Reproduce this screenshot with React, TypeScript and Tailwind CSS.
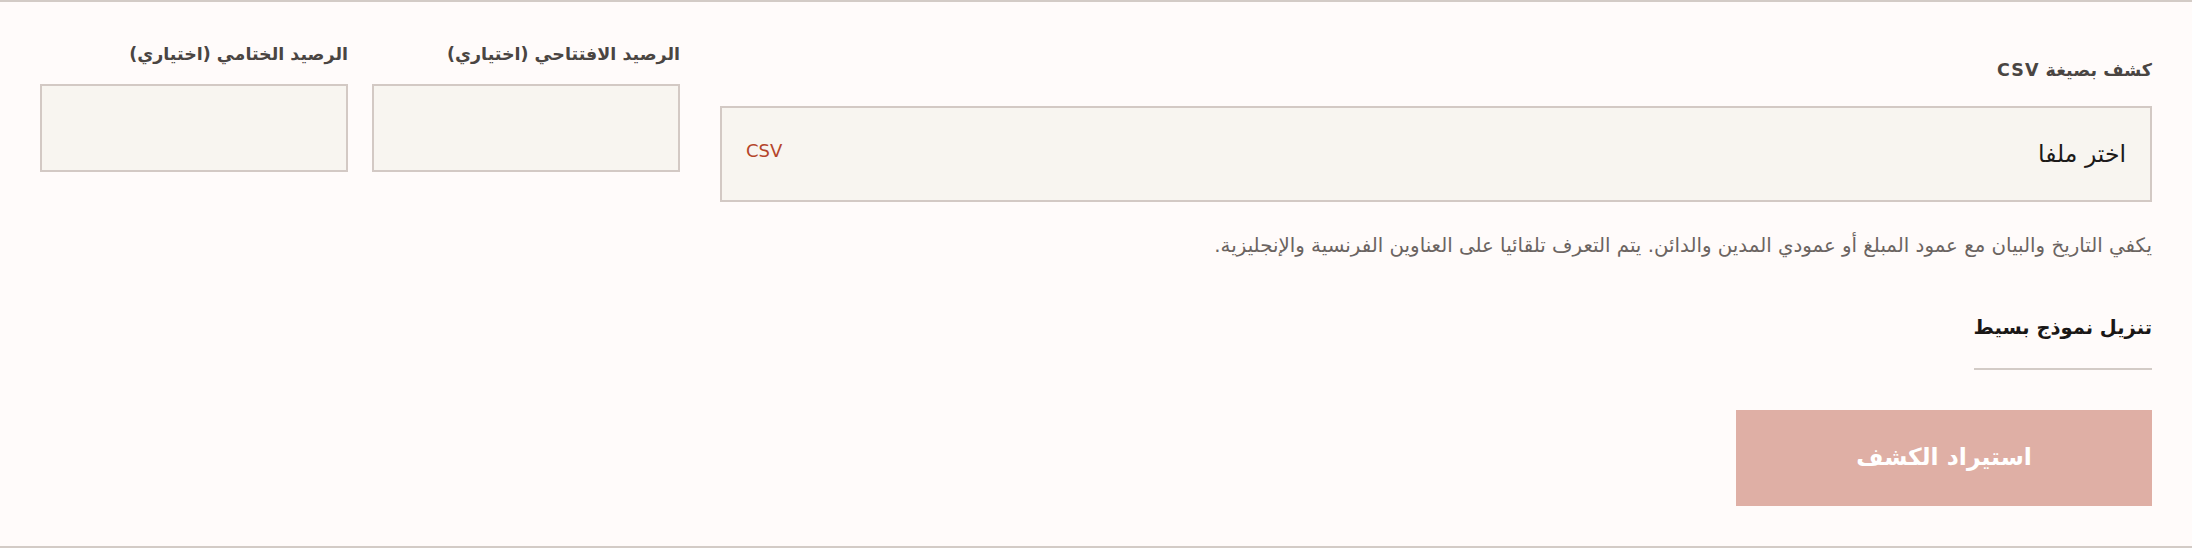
import React from "react";

const FONT = { fontFamily: '"DejaVu Sans", "Noto Sans", sans-serif' };

function BalanceField({ label }: { label: string }) {
  return (
    <div className="flex w-[308px] flex-col">
      <label className="text-[17.5px] font-bold leading-[24px] text-[#4a4542]">{label}</label>
      <input
        type="text"
        className="mt-[18px] h-[88px] w-full border-2 border-[#d3c9c4] bg-[#f8f5f0] px-4 outline-none"
      />
    </div>
  );
}

export default function App() {
  return (
    <div
      dir="rtl"
      style={FONT}
      className="box-border h-[548px] w-full border-y-2 border-[#d3cbc6] bg-[#fffbfa] px-10"
    >
      <div className="flex items-start gap-10">
        <div className="flex flex-1 flex-col pt-[56px]">
          <label className="text-[17.5px] font-bold leading-[24px] tracking-[0.06em] text-[#4a4542]">
            كشف بصيغة CSV
          </label>
          <div className="mt-[24px] flex h-[96px] items-center justify-between border-2 border-[#d3c9c4] bg-[#f8f5f0] px-[24px]">
            <span className="text-[23.5px] leading-[32px] text-[#1c1a19]">اختر ملفا</span>
            <span className="mb-[6px] text-[18px] leading-[24px] text-[#b5452b]">CSV</span>
          </div>
          <p className="mt-[30px] text-[19.8px] leading-[28px] text-[#6b6461]">
            يكفي التاريخ والبيان مع عمود المبلغ أو عمودي المدين والدائن. يتم التعرف تلقائيا على العناوين الفرنسية والإنجليزية.
          </p>
          <div className="mt-[55px] flex">
            <a href="#" className="border-b-2 border-[#d3cbc6] pb-[27px] text-[19.5px] font-bold leading-[26px] text-[#1a1716]">
              تنزيل نموذج بسيط
            </a>
          </div>
          <div className="mt-[40px] flex">
            <button
              type="button"
              className="h-[96px] w-[416px] bg-[#dfafa5] text-[23.5px] font-bold text-white"
            >
              استيراد الكشف
            </button>
          </div>
        </div>
        <div className="flex gap-6 pt-[40px]">
          <BalanceField label="الرصيد الافتتاحي (اختياري)" />
          <BalanceField label="الرصيد الختامي (اختياري)" />
        </div>
      </div>
    </div>
  );
}
